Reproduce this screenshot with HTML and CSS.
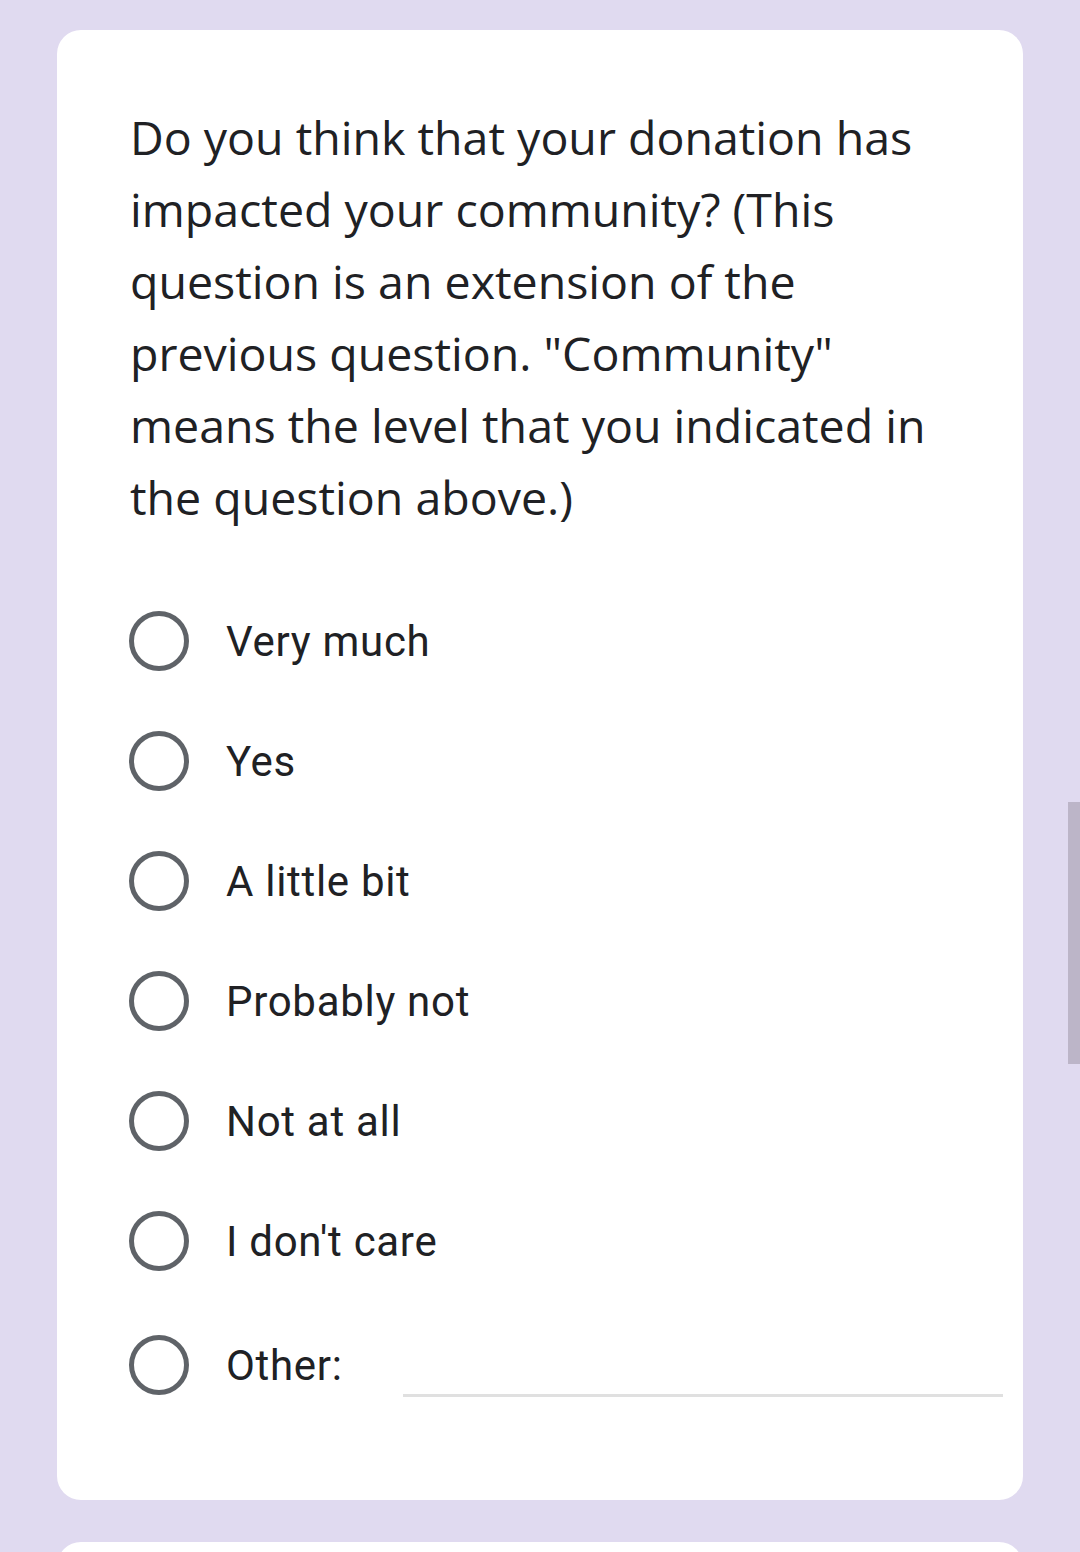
FILE: index.html
```html
<!DOCTYPE html>
<html>
<head>
<meta charset="utf-8">
<link rel="stylesheet" href="styles.css">
</head>
<body>
<div class="card">
  <div class="question">Do you think that your donation has<br>impacted your community? (This<br>question is an extension of the<br>previous question. "Community"<br>means the level that you indicated in<br>the question above.)</div>
  <div class="options">
    <div class="option"><span class="radio"></span><span class="label">Very much</span></div>
    <div class="option"><span class="radio"></span><span class="label">Yes</span></div>
    <div class="option"><span class="radio"></span><span class="label">A little bit</span></div>
    <div class="option"><span class="radio"></span><span class="label">Probably not</span></div>
    <div class="option"><span class="radio"></span><span class="label">Not at all</span></div>
    <div class="option"><span class="radio"></span><span class="label">I don't care</span></div>
    <div class="option other"><span class="radio"></span><span class="label other-label">Other:</span><span class="other-input"></span></div>
  </div>
</div>
<div class="card next"></div>
<div class="scrollbar"></div>
</body>
</html>
```
FILE: styles.css
```css
html, body {
  margin: 0;
  padding: 0;
}
body {
  background: #e0daf0;
  width: 1080px;
  height: 1552px;
  overflow: hidden;
  position: relative;
}
.card {
  background: #ffffff;
  margin: 30px 57px 0 57px;
  width: 966px;
  height: 1470px;
  box-sizing: border-box;
  border-radius: 24px;
  padding: 71px 20px 0 73px;
}
.card.next {
  margin-top: 42px;
  height: 60px;
}
.question {
  font-family: "Open Sans", "Liberation Sans", sans-serif;
  font-size: 46.5px;
  line-height: 72px;
  color: #202124;
  white-space: nowrap;
}
.options {
  margin-top: 48px;
}
.option {
  display: flex;
  align-items: center;
  height: 120px;
}
.radio {
  width: 60px;
  height: 60px;
  margin-left: -1px;
  box-sizing: border-box;
  border: 5.5px solid #5f6368;
  border-radius: 50%;
  flex: none;
}
.label {
  font-family: Roboto, "Liberation Sans", sans-serif;
  font-size: 42px;
  letter-spacing: 0.7px;
  color: #202124;
  margin-left: 37px;
}
.option.other {
  height: 128px;
}
.label.other-label {
  width: 177px;
  flex: none;
}
.other-input {
  flex: 1;
  align-self: flex-end;
  height: 32px;
  margin-bottom: 32px;
  border-bottom: 3px solid #e0e0e0;
}
.scrollbar {
  position: absolute;
  left: 1068px;
  top: 802px;
  width: 12px;
  height: 262px;
  background: #bcb5c8;
}
```
